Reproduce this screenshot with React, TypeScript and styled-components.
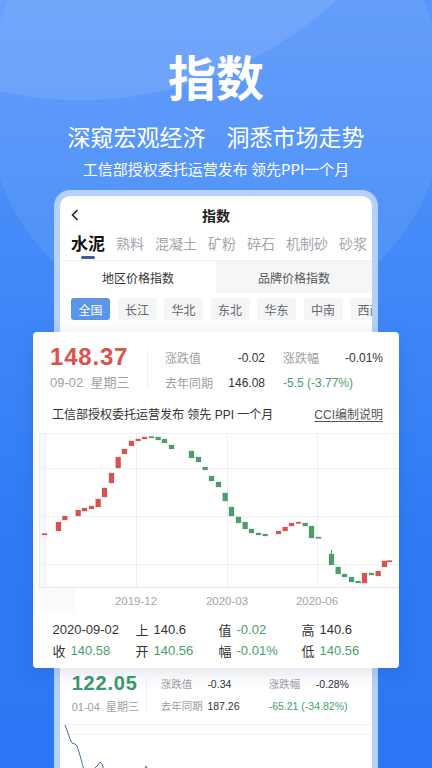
import styled, { createGlobalStyle } from 'styled-components'

const GlobalStyle = createGlobalStyle`
  html, body {
    margin: 0;
    padding: 0;
  }
  body {
    font-family: 'Liberation Sans', 'Noto Sans CJK SC', sans-serif;
    -webkit-font-smoothing: antialiased;
  }
`

const RED = '#d9524d'
const GREEN = '#4c9d6b'

const Page = styled.div`
  position: relative;
  width: 432px;
  height: 768px;
  overflow: hidden;
  background: linear-gradient(180deg, #5897fa 0%, #4289f8 35%, #2f7bf6 70%, #2b77f5 100%);

  &::before {
    content: '';
    position: absolute;
    left: -300px;
    top: -660px;
    width: 760px;
    height: 760px;
    border-radius: 50%;
    background: rgba(255, 255, 255, 0.1);
  }
  &::after {
    content: '';
    position: absolute;
    left: -14px;
    top: -130px;
    width: 460px;
    height: 460px;
    border-radius: 50%;
    background: rgba(255, 255, 255, 0.07);
  }
`

const Hero = styled.header`
  position: relative;
  z-index: 1;
  padding-top: 46px;
  text-align: center;
  color: #fff;
  font-family: 'Noto Sans CJK SC', sans-serif;
`

const HeroTitle = styled.h1`
  margin: 0;
  font-size: 48px;
  line-height: 58px;
  font-weight: 700;
`

const HeroSlogan = styled.div`
  margin-top: 16px;
  font-size: 23px;
  line-height: 32px;
  display: flex;
  justify-content: center;
  gap: 21px;
`

const HeroTagline = styled.div`
  margin-top: 6px;
  font-size: 15px;
  line-height: 22px;
`

const Phone = styled.section`
  position: relative;
  z-index: 1;
  margin: 10px 54px 0;
  height: 620px;
  border: 6px solid #b5d0fb;
  border-bottom: none;
  border-radius: 16px 16px 0 0;
  background: #fff;
`

const NavBar = styled.div`
  height: 38px;
  display: grid;
  grid-template-columns: 40px 1fr 40px;
  align-items: center;
  padding: 0 11px;
  color: #222;
`

const NavTitle = styled.div`
  text-align: center;
  font-size: 14px;
  font-weight: 700;
  font-family: 'Noto Sans CJK SC', sans-serif;
`

const CategoryRow = styled.div`
  height: 26px;
  display: flex;
  gap: 11px;
  padding: 0 11px;
  border-bottom: 1px solid #f0f1f3;
  font-family: 'Noto Sans CJK SC', sans-serif;
`

const Category = styled.div<{ $active?: boolean }>`
  display: flex;
  flex-direction: column;
  align-items: center;
  flex-shrink: 0;
  font-size: ${p => (p.$active ? '17px' : '14px')};
  font-weight: ${p => (p.$active ? 700 : 400)};
  color: ${p => (p.$active ? '#111' : '#a3a6ab')};
  line-height: 18px;
`

const Indicator = styled.span`
  margin-top: 4px;
  width: 14px;
  height: 3px;
  border-radius: 2px;
  background: #3b5b94;
`

const SubTabs = styled.div`
  display: grid;
  grid-template-columns: 1fr 1fr;
  height: 32px;
  font-size: 12px;
  font-family: 'Noto Sans CJK SC', sans-serif;
`

const SubTab = styled.div<{ $active?: boolean }>`
  display: flex;
  align-items: center;
  justify-content: center;
  background: ${p => (p.$active ? '#fff' : '#f5f6f8')};
  color: ${p => (p.$active ? '#333' : '#555')};
`

const ChipRow = styled.div`
  display: flex;
  gap: 7.5px;
  padding: 5px 11px 0;
  overflow: hidden;
`

const Chip = styled.div<{ $active?: boolean }>`
  flex-shrink: 0;
  width: 39px;
  height: 22px;
  border-radius: 3px;
  display: flex;
  align-items: center;
  justify-content: center;
  font-size: 12px;
  font-family: 'Noto Sans CJK SC', sans-serif;
  background: ${p => (p.$active ? '#5a95ea' : '#f4f5f7')};
  color: ${p => (p.$active ? '#fff' : '#666')};
`

const Card = styled.div`
  position: relative;
  z-index: 2;
  margin: 12px -27px 0;
  height: 336px;
  box-sizing: border-box;
  padding-top: 11px;
  background: #fff;
  border-radius: 4px;
  box-shadow: 0 4px 18px rgba(30, 60, 120, 0.16);
`

const Summary = styled.div`
  display: flex;
  padding-left: 17px;
`

const PriceBlock = styled.div<{ $w: number }>`
  width: ${p => p.$w}px;
`

const Price = styled.div<{ $tone: string; $size: number }>`
  font-size: ${p => p.$size}px;
  line-height: ${p => p.$size + 4}px;
  font-weight: 700;
  letter-spacing: 0.8px;
  color: ${p => p.$tone};
`

const DateText = styled.div<{ $size: number }>`
  margin-top: 3px;
  font-size: ${p => p.$size}px;
  line-height: 18px;
  color: #a0a0a0;
  white-space: pre;
`

const VDivider = styled.div<{ $h: number }>`
  width: 1px;
  height: ${p => p.$h}px;
  margin-top: 7px;
  background: #eceef1;
`

const Stats = styled.div`
  margin: 5.5px 0 0 17px;
  display: grid;
  grid-template-columns: 100px 100px;
  column-gap: 18px;
  row-gap: 7px;
  font-size: 12px;
  line-height: 18px;
`

const Pair = styled.div`
  display: flex;
  justify-content: space-between;
`

const Label = styled.span`
  color: #a0a0a0;
  font-family: 'Noto Sans CJK SC', sans-serif;
`

const Value = styled.span<{ $tone?: string }>`
  color: ${p => p.$tone || '#333'};
`

const WideValue = styled(Value)`
  grid-column: span 2;
`

const SubLine = styled.div`
  margin-top: 14px;
  padding: 0 16px 0 19px;
  display: flex;
  justify-content: space-between;
  font-size: 12px;
  line-height: 18px;
  color: #333;
`

const Link = styled.span`
  color: #555;
  text-decoration: underline;
  text-underline-offset: 2px;
`

const ChartBox = styled.svg`
  display: block;
  margin-top: 4px;
`

const InfoGrid = styled.div`
  margin-top: 5.5px;
  padding-left: 19.5px;
  display: grid;
  grid-template-columns: repeat(4, 83px);
  font-size: 13px;
  line-height: 21px;
  color: #333;
`

const InfoCell = styled.div`
  display: flex;
  gap: 5px;
`

const InfoKey = styled.span`
  font-family: 'Noto Sans CJK SC', sans-serif;
`

const Lower = styled.div`
  display: flex;
  padding: 2.5px 0 0 11.7px;
`

const LowerStats = styled.div`
  margin: 5.5px 0 0 14px;
  display: grid;
  grid-template-columns: 46.7px 61.3px 47px auto;
  row-gap: 4px;
  font-size: 10.5px;
  line-height: 16px;
`

const Rule = styled.div`
  margin-top: 8px;
  height: 1px;
  background: #f0f1f4;
`

const Sketch = styled.svg`
  display: block;
`

type Candle = [number, number, number, 'r' | 'g', number?]

const candles: Candle[] = [
  [42, 533.5, 535, 'r'],
  [56, 522, 531, 'r'],
  [62.3, 516, 520, 'r'],
  [75.7, 510, 516, 'r'],
  [82, 508, 511, 'r'],
  [89, 506, 509, 'r'],
  [95.7, 499, 507, 'r'],
  [102, 488, 497, 'r'],
  [109, 473, 483, 'r'],
  [115.7, 457, 468, 'r'],
  [122, 449, 454, 'r'],
  [129, 441, 446, 'r'],
  [135.7, 439, 441, 'r'],
  [142, 437, 439, 'r'],
  [149, 436.5, 438, 'g'],
  [155.7, 437, 440, 'g'],
  [162, 439, 443, 'g'],
  [169, 445, 449, 'g'],
  [189, 451, 458, 'g'],
  [196, 457, 462, 'g'],
  [202.7, 467, 470, 'g'],
  [209, 476, 481, 'g'],
  [216, 482, 487, 'g'],
  [222.7, 493, 501, 'g'],
  [229, 507, 516, 'g'],
  [236, 517, 523, 'g'],
  [242.7, 522, 529, 'g'],
  [249, 529, 533, 'g'],
  [256, 533, 535, 'g'],
  [262.7, 534, 536, 'g'],
  [276, 531, 534, 'r'],
  [282.7, 527, 531, 'r'],
  [289, 523, 526, 'r'],
  [296, 522, 523.5, 'r'],
  [302.7, 523, 526, 'g'],
  [309, 526, 538, 'g'],
  [316, 537, 538.5, 'g'],
  [329, 554, 565, 'g', 550],
  [335.7, 567, 574, 'g'],
  [342, 574, 577, 'g'],
  [349, 577, 582, 'g'],
  [355.7, 581, 583, 'g'],
  [362, 573, 583, 'r'],
  [369, 573, 575, 'g'],
  [375.7, 571, 576, 'r'],
  [382, 561, 567, 'r'],
  [387, 560.5, 562, 'r'],
]

function KChart() {
  const hLines = [433, 468, 516, 564]
  const vLines = [45, 136, 227, 317]
  const labels: [number, string][] = [
    [136, '2019-12'],
    [227, '2020-03'],
    [317, '2020-06'],
  ]
  return (
    <ChartBox width={366} height={185} viewBox='0 0 366 185'>
      <g transform='translate(-33,-428)'>
        <rect x={39} y={433} width={6} height={154} fill='#f7f8fa' />
        <rect x={39} y={587} width={36} height={26} fill='#fbfbfc' />
        <line x1={39.5} y1={433} x2={39.5} y2={587} stroke='#eceef1' />
        {hLines.map(y => (
          <line key={y} x1={39} y1={y + 0.5} x2={398} y2={y + 0.5} stroke='#eef0f3' />
        ))}
        {vLines.map(x => (
          <line key={x} x1={x + 0.5} y1={433} x2={x + 0.5} y2={587} stroke='#eef0f3' />
        ))}
        <line x1={39} y1={587.5} x2={398} y2={587.5} stroke='#e6e8eb' />
        {candles.map(([x, top, bottom, c, wick], i) => {
          const fill = c === 'r' ? RED : GREEN
          return (
            <g key={i}>
              {wick && <line x1={x + 2.5} y1={wick} x2={x + 2.5} y2={top} stroke={fill} strokeWidth={1} />}
              <rect
                x={x}
                y={top}
                width={5}
                height={Math.max(bottom - top, 1.2)}
                fill={fill}
                stroke={c === 'r' ? 'rgba(217,82,77,0.3)' : 'rgba(76,157,107,0.3)'}
                strokeWidth={0.8}
              />
            </g>
          )
        })}
        {labels.map(([x, t]) => (
          <text
            key={t}
            x={x}
            y={605}
            textAnchor='middle'
            fontSize={11.5}
            fill='#a2a4a8'
            fontFamily='Liberation Sans, sans-serif'
          >
            {t}
          </text>
        ))}
      </g>
    </ChartBox>
  )
}

// page coordinates, shifted by the translate below
function LineSketch() {
  const pts =
    '65,723 67,728 70,737 72,741 75,742 77,744 79,750 81,757 82,761 84,768 88,774 92,772 95,766 98,763 100,760 102,762 104,768 110,775 130,778 143,770 146,764 149,770 155,778'
  return (
    <Sketch width={312} height={46} viewBox='0 0 312 46'>
      <g transform='translate(-60,-723)'>
        <line x1={60} y1={732.5} x2={372} y2={732.5} stroke='#f0f1f4' />
        <polyline points={pts} fill='none' stroke='#4a6ea3' strokeWidth={1} />
      </g>
    </Sketch>
  )
}

const categories = ['熟料', '混凝土', '矿粉', '碎石', '机制砂', '砂浆']
const regions = ['全国', '长江', '华北', '东北', '华东', '中南', '西南']

export default function App() {
  return (
    <Page>
      <GlobalStyle />
      <Hero>
        <HeroTitle>指数</HeroTitle>
        <HeroSlogan>
          <span>深窥宏观经济</span>
          <span>洞悉市场走势</span>
        </HeroSlogan>
        <HeroTagline>工信部授权委托运营发布 领先PPI一个月</HeroTagline>
      </Hero>

      <Phone>
        <NavBar>
          <svg width='8' height='12' viewBox='0 0 8 12'>
            <path d='M6.5 1 L1.5 6 L6.5 11' fill='none' stroke='#222' strokeWidth='1.6' />
          </svg>
          <NavTitle>指数</NavTitle>
          <span />
        </NavBar>

        <CategoryRow>
          <Category $active>
            水泥
            <Indicator />
          </Category>
          {categories.map(c => (
            <Category key={c}>{c}</Category>
          ))}
        </CategoryRow>

        <SubTabs>
          <SubTab $active>地区价格指数</SubTab>
          <SubTab>品牌价格指数</SubTab>
        </SubTabs>

        <ChipRow>
          {regions.map((r, i) => (
            <Chip key={r} $active={i === 0}>
              {r}
            </Chip>
          ))}
        </ChipRow>

        <Card>
          <Summary>
            <PriceBlock $w={97}>
              <Price $tone={RED} $size={24}>148.37</Price>
              <DateText $size={13}>{'09-02  星期三'}</DateText>
            </PriceBlock>
            <VDivider $h={38} />
            <Stats>
              <Pair>
                <Label>涨跌值</Label>
                <Value>-0.02</Value>
              </Pair>
              <Pair>
                <Label>涨跌幅</Label>
                <Value>-0.01%</Value>
              </Pair>
              <Pair>
                <Label>去年同期</Label>
                <Value>146.08</Value>
              </Pair>
              <Pair>
                <Value $tone={GREEN}>-5.5 (-3.77%)</Value>
              </Pair>
            </Stats>
          </Summary>

          <SubLine>
            <span>工信部授权委托运营发布 领先 PPI 一个月</span>
            <Link>CCI编制说明</Link>
          </SubLine>

          <KChart />

          <InfoGrid>
            <InfoCell>2020-09-02</InfoCell>
            <InfoCell>
              <InfoKey>上</InfoKey>
              <Value>140.6</Value>
            </InfoCell>
            <InfoCell>
              <InfoKey>值</InfoKey>
              <Value $tone={GREEN}>-0.02</Value>
            </InfoCell>
            <InfoCell>
              <InfoKey>高</InfoKey>
              <Value>140.6</Value>
            </InfoCell>
            <InfoCell>
              <InfoKey>收</InfoKey>
              <Value $tone={GREEN}>140.58</Value>
            </InfoCell>
            <InfoCell>
              <InfoKey>开</InfoKey>
              <Value $tone={GREEN}>140.56</Value>
            </InfoCell>
            <InfoCell>
              <InfoKey>幅</InfoKey>
              <Value $tone={GREEN}>-0.01%</Value>
            </InfoCell>
            <InfoCell>
              <InfoKey>低</InfoKey>
              <Value $tone={GREEN}>140.56</Value>
            </InfoCell>
          </InfoGrid>
        </Card>

        <Lower>
          <PriceBlock $w={74}>
            <Price $tone='#3a9a66' $size={20}>122.05</Price>
            <DateText $size={11}>{'01-04  星期三'}</DateText>
          </PriceBlock>
          <VDivider $h={32} />
          <LowerStats>
            <Label>涨跌值</Label>
            <Value>-0.34</Value>
            <Label>涨跌幅</Label>
            <Value>-0.28%</Value>
            <Label>去年同期</Label>
            <Value>187.26</Value>
            <WideValue $tone={GREEN}>-65.21 (-34.82%)</WideValue>
          </LowerStats>
        </Lower>
        <Rule />
        <LineSketch />
      </Phone>
    </Page>
  )
}
